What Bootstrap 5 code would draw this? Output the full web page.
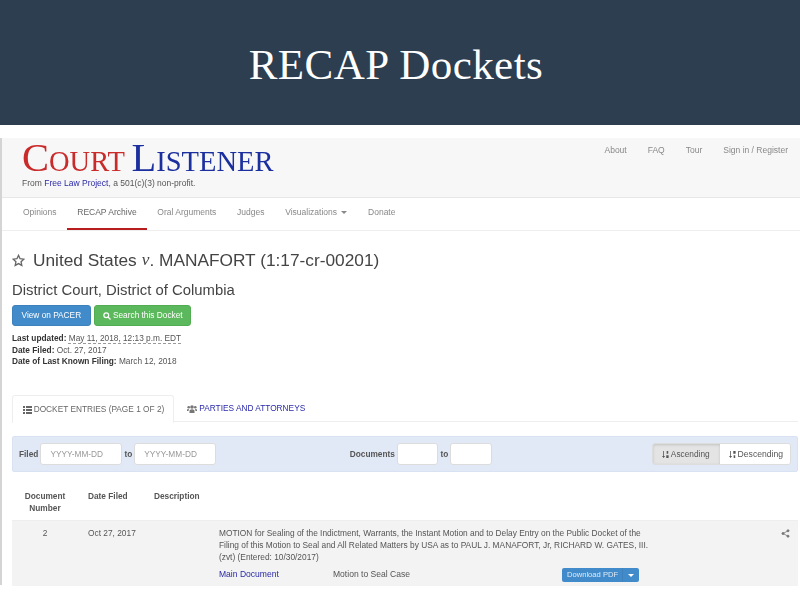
<!DOCTYPE html>
<html lang="en">
<head>
<meta charset="utf-8">
<title>RECAP Dockets</title>
<link href="https://cdn.jsdelivr.net/npm/bootstrap@5.3.0/dist/css/bootstrap.min.css" rel="stylesheet">
<style>
html,body{height:100%;overflow:hidden;background:#fff}
body{font-family:"Liberation Sans",Arial,sans-serif;color:#333;width:800px;height:600px}
a{text-decoration:none;color:#2a2aa8}
.hero{background:#2c3e50;height:125px;color:#fff;font-family:"Liberation Serif",serif;font-size:43px;padding:37px 8px 0 0;line-height:56px;text-align:center;letter-spacing:.45px}
.shot{margin-top:13px;height:447px;border-left:2px solid #d4d4d4;filter:blur(.3px)}
.topbar{background:#f7f7f7;height:60px;border-bottom:1px solid #e7e7e7;padding:6px 12px 0 20px}
.logo{font-family:"Liberation Serif",serif;font-size:28.5px;line-height:28px;height:28px;white-space:nowrap}
.logo .cap{font-size:40.5px}
.lr{color:#c92a2a}.lb{color:#1c2f9e}
.from{font-size:8.5px;line-height:12px;margin-top:5px;color:#555}
.toplinks{gap:21px;font-size:8.5px;color:#888}
.mainnav{height:33px;border-bottom:1px solid #eee;padding-left:21px;gap:20.7px;font-size:8.5px;color:#888;line-height:28px}
.mainnav span{display:block;height:32px}
.mainnav .on{color:#666;border-bottom:2px solid #b81c1c;margin:0 -10.5px;padding:0 10.5px}
.caret-d{display:inline-block;border:3px solid transparent;border-top-color:#888;border-bottom:0;vertical-align:middle;margin-left:2px}
.body-area{padding:0 0 0 10px}
.dtitle{font-size:17.3px;line-height:24px;margin:17px 0 0;color:#444;font-weight:400;display:flex;align-items:center}
.dtitle svg{margin-right:8px}
.dtitle i{font-family:"Liberation Serif",serif;margin:0 0 0 5px}
.court{font-size:14.85px;line-height:18px;margin:9px 0 6px;color:#444;font-weight:400}
.cl-btn{font-size:8.3px;height:21px;line-height:19px;padding:0 7px 0 8px;border-radius:3px;color:#fff;border:1px solid transparent;display:inline-block}
.cl-btn.b-blue{padding:0 8.5px}
.btnrow{gap:3px}
.b-blue{background:#428bca;border-color:#3d81bd}
.b-green{background:#5cb85c;border-color:#52ad52}
.meta{font-size:8.3px;line-height:11.7px;margin-top:7px;color:#555}
.meta b{color:#333}
.meta u{text-decoration:underline dashed #999;text-underline-offset:2px}
.tabsrow{margin-top:27px;height:27px;border-bottom:1px solid #eee;font-size:8.3px;margin-right:2px}
.tabx{height:27px;line-height:26px;padding:0 10px;display:block;white-space:nowrap}
.tabx.on{background:#fff;border:1px solid #eee;border-bottom:0;border-radius:3px 3px 0 0;color:#666;height:28px;position:relative;z-index:1;margin-right:3px;width:162px}
.filterbar{margin:14px 2px 0 0;height:36px;background:#e2e9f6;border:1px solid #d8e2f2;border-radius:2px;padding:0 6px;font-size:8.3px}
.filterbar b{color:#555}
.fld{height:22px;background:#fff;border:1px solid #dcdcdc;border-radius:3px;color:#999;line-height:20px;padding-left:9px;width:82px;margin:0 2px}
.fld.sm{width:41.5px}
.docs{margin-left:131.5px}
.sortg{height:22px;border-radius:3px;overflow:hidden;border:1px solid #ddd}
.sortg span{display:flex;align-items:center;gap:2px;padding:0 10px 0 9px;height:20px;background:#fff;color:#555}
.sortg .act{background:#e4e4e4;box-shadow:inset 0 1px 3px rgba(0,0,0,.15)}
.sortg .dsc2{font-size:8.6px;padding:0 7px 0 9px}
.thead-r{font-size:8.3px;font-weight:700;color:#555;line-height:12px;padding-top:18px;height:49px;border-bottom:1px solid #eee;margin-right:2px}
.c1{width:66px;text-align:center}.c2{width:66px;margin-left:10px}.c3{width:65px}
.rowx{background:#f3f3f3;height:65px;font-size:8.35px;color:#555;line-height:12px;padding-top:6px;margin-right:2px}
.c4{width:446px}
.para{width:434px}
.attrow{margin-top:5px;font-size:8.55px}
.dmain{width:114px;flex:none}
.dsc{width:229px;flex:none}
.dlg{height:14px;background:#428bca;border-radius:2px;color:#dfeaf5;font-size:7.6px;line-height:14px;display:flex;width:77px;flex:none;white-space:nowrap}
.dlg span{padding:0 0 0 5px}
.dlg em{margin-left:auto;width:17px;border-left:1px solid #3d81bd;display:flex;align-items:center;justify-content:center}
.caret-w{border:3px solid transparent;border-top-color:#fff;border-bottom:0}
</style>
</head>
<body>
<header class="hero">RECAP Dockets</header>
<div class="shot">
  <div class="topbar d-flex justify-content-between">
    <div>
      <div class="logo"><span class="lr"><span class="cap">C</span>OURT</span> <span class="lb"><span class="cap">L</span>ISTENER</span></div>
      <div class="from">From <a href="#">Free Law Project</a>, a 501(c)(3) non-profit.</div>
    </div>
    <div class="toplinks d-flex"><span>About</span><span>FAQ</span><span>Tour</span><span>Sign in / Register</span></div>
  </div>
  <div class="mainnav d-flex">
    <span>Opinions</span><span class="on">RECAP Archive</span><span>Oral Arguments</span><span>Judges</span><span>Visualizations <i class="caret-d"></i></span><span>Donate</span>
  </div>
  <div class="body-area">
    <h1 class="dtitle"><svg width="13" height="13" viewBox="0 0 24 24" fill="none" stroke="#666" stroke-width="2.4"><path d="M12 2.5l2.9 6.3 6.9.8-5.1 4.7 1.4 6.8-6.1-3.4-6.1 3.4 1.4-6.8L2.200 9.600l6.900-.8z"/></svg>United States <i>v</i>. MANAFORT (1:17-cr-00201)</h1>
    <h2 class="court">District Court, District of Columbia</h2>
    <div class="d-flex btnrow">
      <a class="cl-btn b-blue" href="#">View on PACER</a>
      <a class="cl-btn b-green" href="#"><svg width="8" height="8" viewBox="0 0 16 16" fill="none" stroke="#fff" stroke-width="2.400"><circle cx="6.500" cy="6.500" r="4.800"/><path d="M10 10l5 5"/></svg> Search this Docket</a>
    </div>
    <div class="meta">
      <div><b>Last updated:</b> <u>May 11, 2018, 12:13 p.m. EDT</u></div>
      <div><b>Date Filed:</b> Oct. 27, 2017</div>
      <div><b>Date of Last Known Filing:</b> March 12, 2018</div>
    </div>
    <div class="tabsrow d-flex">
      <span class="tabx on"><svg width="9" height="8" viewBox="0 0 9 8" fill="#666"><path d="M0 0h2v2H0zM3 0h6v2H3zM0 3h2v2H0zM3 3h6v2H3zM0 6h2v2H0zM3 6h6v2H3z"/></svg>&#8201;DOCKET ENTRIES (PAGE 1 OF 2)</span>
      <a class="tabx" href="#"><svg width="10" height="8" viewBox="0 0 10 8" fill="#777"><circle cx="5" cy="2" r="1.800"/><circle cx="1.700" cy="2.200" r="1.300"/><circle cx="8.300" cy="2.200" r="1.300"/><path d="M2.500 8V5.500Q5 3 7.500 5.500V8zM0 6V4.500Q1 3.500 2 4.200L1.500 6zM10 6V4.500Q9 3.500 8 4.200L8.500 6z"/></svg> PARTIES AND ATTORNEYS</a>
    </div>
    <div class="filterbar d-flex align-items-center">
      <b>Filed</b><div class="fld">YYYY-MM-DD</div><b>to</b><div class="fld">YYYY-MM-DD</div>
      <b class="docs">Documents</b><div class="fld sm"></div><b>to</b><div class="fld sm"></div>
      <div class="sortg d-flex ms-auto">
        <span class="act"><svg width="7" height="9" viewBox="0 0 9 9" fill="#555"><path d="M1.500 0h1v6.500H4L2 9 0 6.500h1.500zM6 0h2v3.500H6zM5.500 5.500h3V9h-3z"/></svg>Ascending</span>
        <span class="dsc2"><svg width="7" height="9" viewBox="0 0 9 9" fill="#555"><path d="M1.500 0h1v6.500H4L2 9 0 6.500h1.500zM5.500 0h3v3.500h-3zM6 5.500h2V9H6z"/></svg>Descending</span>
      </div>
    </div>
    <div class="thead-r d-flex">
      <div class="c1">Document Number</div><div class="c2">Date Filed</div><div class="c3">Description</div>
    </div>
    <div class="rowx d-flex">
      <div class="c1">2</div><div class="c2">Oct 27, 2017</div><div class="c3"></div>
      <div class="c4">
        <div class="para">MOTION for Sealing of the Indictment, Warrants, the Instant Motion and to Delay Entry on the Public Docket of the Filing of this Motion to Seal and All Related Matters by USA as to PAUL J. MANAFORT, Jr, RICHARD W. GATES, III. (zvt) (Entered: 10/30/2017)</div>
        <div class="d-flex attrow">
          <a href="#" class="dmain">Main Document</a>
          <span class="dsc">Motion to Seal Case</span>
          <div class="dlg"><span>Download PDF</span><em><i class="caret-w"></i></em></div>
        </div>
      </div>
      <div class="ms-auto me-2"><svg width="9" height="9" viewBox="0 0 9 9" fill="#777" stroke="#777"><circle cx="7" cy="1.800" r="1" /><circle cx="7" cy="7.200" r="1"/><circle cx="2" cy="4.500" r="1"/><path d="M7 1.800L2 4.500l5 2.700" fill="none" stroke-width=".8"/></svg></div>
    </div>
  </div>
</div>
</body>
</html>
